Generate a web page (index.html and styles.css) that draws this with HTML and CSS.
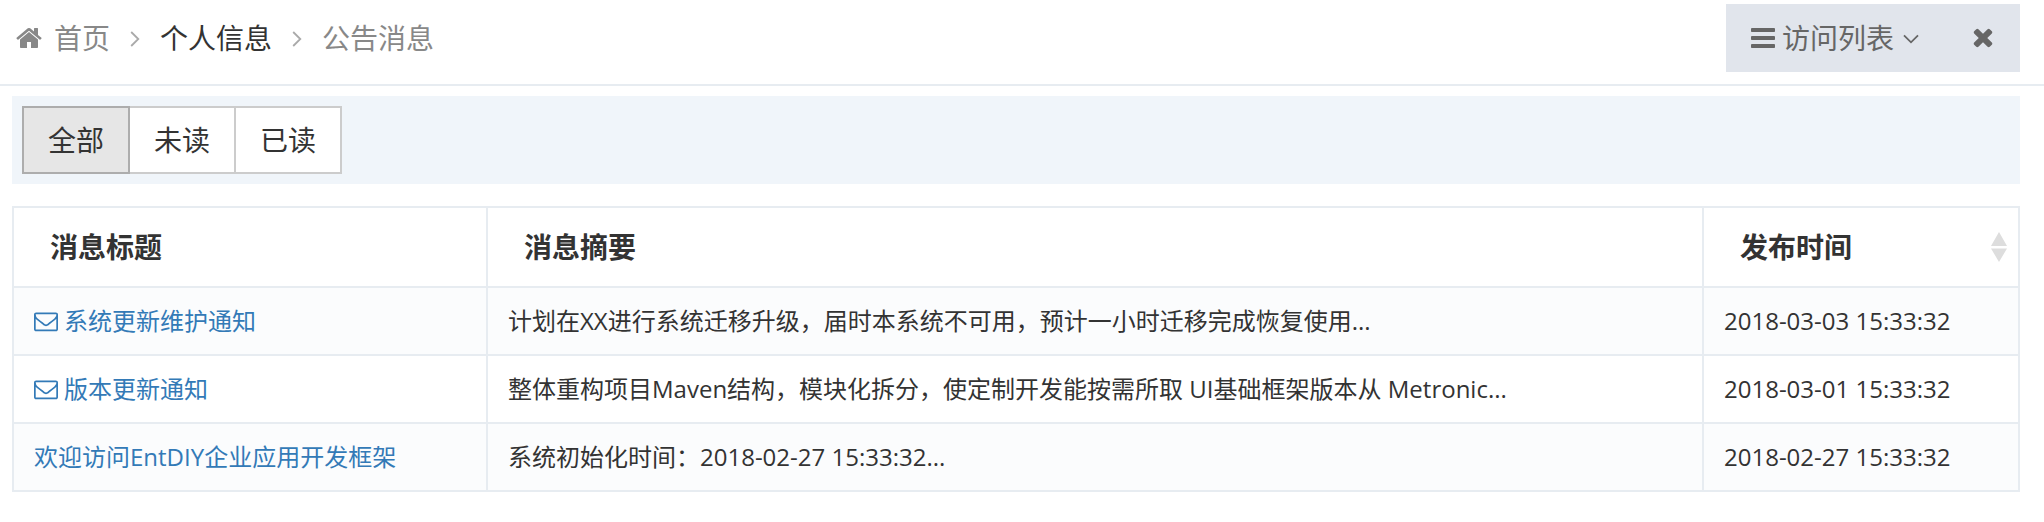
FILE: index.html
```html
<!DOCTYPE html>
<html lang="zh-CN">
<head>
<meta charset="utf-8">
<title>公告消息</title>
<link rel="stylesheet" href="styles.css">
</head>
<body>
<svg class="defs" width="0" height="0">
  <symbol id="home" viewBox="0 0 1792 1792"><path d="M1472 992v480q0 26-19 45t-45 19h-384v-384h-256v384h-384q-26 0-45-19t-19-45v-480q0-1 .5-3t.5-3l575-474 575 474q1 2 1 6zm223-69l-62 74q-8 9-21 11h-3q-13 0-21-7l-692-577-692 577q-12 8-24 7-13-2-21-11l-62-74q-8-10-7-23.5t11-21.5l719-599q32-26 76-26t76 26l244 204v-195q0-14 9-23t23-9h192q14 0 23 9t9 23v408l219 182q10 8 11 21.5t-7 23.5z"/></symbol>
  <symbol id="bars" viewBox="0 0 1792 1792"><path d="M1664 1344v128q0 26-19 45t-45 19h-1408q-26 0-45-19t-19-45v-128q0-26 19-45t45-19h1408q26 0 45 19t19 45zm0-512v128q0 26-19 45t-45 19h-1408q-26 0-45-19t-19-45v-128q0-26 19-45t45-19h1408q26 0 45 19t19 45zm0-512v128q0 26-19 45t-45 19h-1408q-26 0-45-19t-19-45v-128q0-26 19-45t45-19h1408q26 0 45 19t19 45z"/></symbol>
  <symbol id="times" viewBox="0 0 1792 1792"><path d="M1490 1322q0 40-28 68l-136 136q-28 28-68 28t-68-28l-294-294-294 294q-28 28-68 28t-68-28l-136-136q-28-28-28-68t28-68l294-294-294-294q-28-28-28-68t28-68l136-136q28-28 68-28t68 28l294 294 294-294q28-28 68-28t68 28l136 136q28 28 28 68t-28 68l-294 294 294 294q28 28 28 68z"/></symbol>
  <symbol id="envelope" viewBox="0 0 1792 1792"><path d="M1664 1504v-768q-32 36-69 66-268 206-426 338-51 43-83 67t-86.5 48.5-102.5 24.5h-2q-48 0-102.5-24.5t-86.5-48.5-83-67q-158-132-426-338-37-30-69-66v768q0 13 9.5 22.5t22.5 9.5h1472q13 0 22.5-9.5t9.5-22.5zm0-1051v-24.5l-.5-13-3-12.5-5.5-9-9-7.5-14-2.5h-1472q-13 0-22.5 9.5t-9.5 22.5q0 168 147 284 193 152 401 317 6 5 35 29.5t46 37.5 44.5 31.5 50.5 27.5 43 9h2q20 0 43-9t50.5-27.5 44.5-31.5 46-37.5 35-29.5q208-165 401-317 54-43 100.500-115.500t46.500-131.500zm128-37v1088q0 66-47 113t-113 47h-1472q-66 0-113-47t-47-113v-1088q0-66 47-113t113-47h1472q66 0 113 47t47 113z"/></symbol>
</svg>
<header class="page-bar">
  <nav class="breadcrumb">
    <svg class="icon home"><use href="#home"/></svg>
    <a class="crumb">首页</a>
    <svg class="angle" viewBox="0 0 10 16"><path d="M1.200 1 8.300 8 1.200 15"/></svg>
    <a class="crumb current">个人信息</a>
    <svg class="angle" viewBox="0 0 10 16"><path d="M1.200 1 8.300 8 1.200 15"/></svg>
    <a class="crumb">公告消息</a>
  </nav>
  <div class="actions">
    <svg class="icon bars"><use href="#bars"/></svg>
    <span class="visits">访问列表</span>
    <svg class="caret" viewBox="0 0 16 10"><path d="M1 1.300 8 8.300 15 1.300"/></svg>
    <svg class="icon close"><use href="#times"/></svg>
  </div>
</header>
<main class="content">
  <div class="toolbar">
    <div class="group">
      <button class="btn active">全部</button>
      <button class="btn">未读</button>
      <button class="btn">已读</button>
    </div>
  </div>
  <table class="messages">
    <colgroup><col class="col-title"><col class="col-summary"><col class="col-time"></colgroup>
    <thead>
      <tr><th>消息标题</th><th>消息摘要</th><th><div class="sortable"><span>发布时间</span><svg class="sort" viewBox="0 0 16 30"><path d="M8 0 16 14H0zM0 16.500H16L8 30z"/></svg></div></th></tr>
    </thead>
    <tbody>
      <tr><td><a class="link"><svg class="mail"><use href="#envelope"/></svg>系统更新维护通知</a></td><td>计划在XX进行系统迁移升级，届时本系统不可用，预计一小时迁移完成恢复使用...</td><td>2018-03-03 15:33:32</td></tr>
      <tr><td><a class="link"><svg class="mail"><use href="#envelope"/></svg>版本更新通知</a></td><td>整体重构项目Maven结构，模块化拆分，使定制开发能按需所取 UI基础框架版本从 Metronic...</td><td>2018-03-01 15:33:32</td></tr>
      <tr><td><a class="link">欢迎访问EntDIY企业应用开发框架</a></td><td>系统初始化时间：2018-02-27 15:33:32...</td><td>2018-02-27 15:33:32</td></tr>
    </tbody>
  </table>
</main>
</body>
</html>
```
FILE: styles.css
```css
* { box-sizing: border-box; }
body {
  margin: 0;
  background: #fff;
  color: #333;
  font: 28px/40px "Open Sans", "Noto Sans CJK SC", sans-serif;
}
svg { display: block; flex: none; fill: currentColor; }
.defs { position: absolute; }

.page-bar {
  display: flex;
  justify-content: space-between;
  align-items: flex-start;
  height: 86px;
  padding: 4px 24px 0 15px;
  border-bottom: 2px solid #e7ecf1;
}
.breadcrumb { display: flex; align-items: center; height: 68px; color: #888; }
.icon { width: 28px; height: 28px; }
.home { margin-right: 11px; }
.current { color: #333; }
.angle { width: 10px; height: 16px; margin: 2px 20px 0 20px; color: #aaa; }
.angle path, .caret path { fill: none; stroke: currentColor; stroke-width: 1.8; }
.actions {
  display: flex;
  align-items: center;
  width: 294px;
  height: 68px;
  padding-left: 23px;
  background: #e1e5ec;
  color: #666;
}
.visits { margin-left: 5px; }
.caret { width: 16px; height: 10px; margin: 2px 0 0 9px; }
.close { margin-left: 50px; margin-bottom: 2px; }

.content { padding: 10px 24px 0 12px; }
.toolbar { height: 88px; padding: 10px; background: #f0f5fa; }
.group { display: flex; }
.btn {
  width: 108px;
  height: 68px;
  margin-left: -2px;
  padding: 0;
  border: 2px solid #ccc;
  background: #fff;
  color: #333;
  font: inherit;
}
.btn.active { position: relative; margin-left: 0; border-color: #adadad; background: #e6e6e6; }

.messages {
  width: 2008px;
  margin-top: 22px;
  border-collapse: collapse;
  table-layout: fixed;
}
.col-title { width: 474px; }
.col-summary { width: 1216px; }
.messages th, .messages td { border: 2px solid #e7ecf1; text-align: left; white-space: nowrap; }
.messages th { height: 80px; padding: 0 0 0 36px; font-weight: 600; }
.messages td { height: 68px; padding: 0 0 1px 20px; font-size: 24px; line-height: 34px; }
.messages tbody tr:nth-child(odd) { background: #fbfcfd; }
.sortable { display: flex; align-items: center; justify-content: space-between; padding-right: 11px; }
.sort { width: 16px; height: 30px; color: #ddd; }
.link { display: flex; align-items: center; color: #337ab7; }
.mail { width: 24px; height: 24px; margin-right: 6px; }
```
